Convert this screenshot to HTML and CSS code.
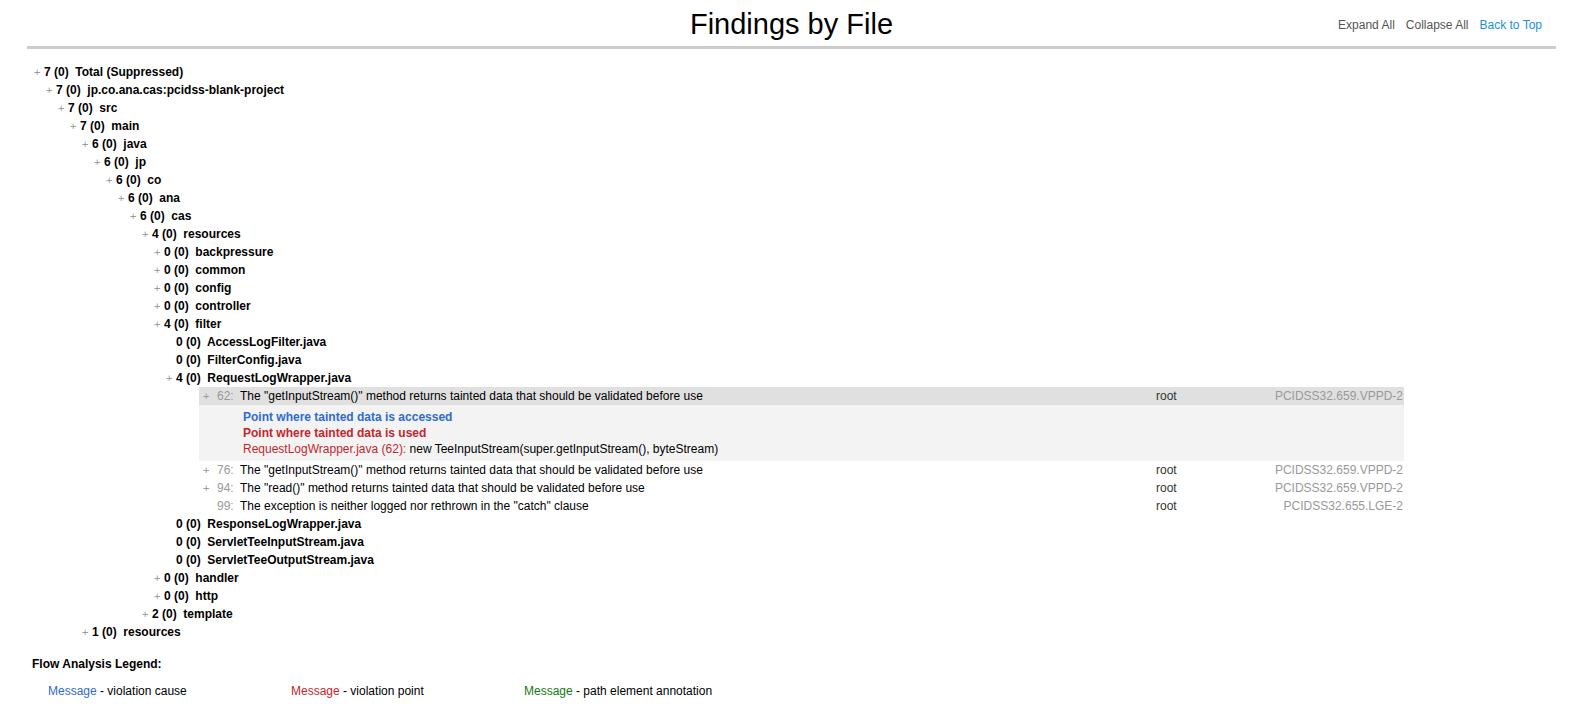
FILE: index.html
```html
<!DOCTYPE html>
<html>
<head>
<meta charset="utf-8">
<title>Findings by File</title>
<link rel="stylesheet" href="styles.css">
</head>
<body>
<header class="hdr">
  <div class="hdr-side"></div>
  <h1 class="title">Findings by File</h1>
  <nav class="hdr-links">
    <a class="lnk">Expand All</a>
    <a class="lnk">Collapse All</a>
    <a class="lnk lnk-top">Back to Top</a>
  </nav>
</header>

<ul class="tree">
  <li><div class="node"><span class="tg">+</span>7 (0)&nbsp; Total (Suppressed)</div>
  <ul class="kids">
    <li><div class="node"><span class="tg">+</span>7 (0)&nbsp; jp.co.ana.cas:pcidss-blank-project</div>
    <ul class="kids">
      <li><div class="node"><span class="tg">+</span>7 (0)&nbsp; src</div>
      <ul class="kids">
        <li><div class="node"><span class="tg">+</span>7 (0)&nbsp; main</div>
        <ul class="kids">
          <li><div class="node"><span class="tg">+</span>6 (0)&nbsp; java</div>
          <ul class="kids">
            <li><div class="node"><span class="tg">+</span>6 (0)&nbsp; jp</div>
            <ul class="kids">
              <li><div class="node"><span class="tg">+</span>6 (0)&nbsp; co</div>
              <ul class="kids">
                <li><div class="node"><span class="tg">+</span>6 (0)&nbsp; ana</div>
                <ul class="kids">
                  <li><div class="node"><span class="tg">+</span>6 (0)&nbsp; cas</div>
                  <ul class="kids">
                    <li><div class="node"><span class="tg">+</span>4 (0)&nbsp; resources</div>
                    <ul class="kids">
                      <li><div class="node"><span class="tg">+</span>0 (0)&nbsp; backpressure</div></li>
                      <li><div class="node"><span class="tg">+</span>0 (0)&nbsp; common</div></li>
                      <li><div class="node"><span class="tg">+</span>0 (0)&nbsp; config</div></li>
                      <li><div class="node"><span class="tg">+</span>0 (0)&nbsp; controller</div></li>
                      <li><div class="node"><span class="tg">+</span>4 (0)&nbsp; filter</div>
                      <ul class="kids">
                        <li><div class="node"><span class="tg"></span>0 (0)&nbsp; AccessLogFilter.java</div></li>
                        <li><div class="node"><span class="tg"></span>0 (0)&nbsp; FilterConfig.java</div></li>
                        <li><div class="node"><span class="tg">+</span>4 (0)&nbsp; RequestLogWrapper.java</div>
                          <div class="findings">
                            <div class="frow frow-open">
                              <span class="ftg">+</span><span class="fnum">62:</span>
                              <span class="fmsg">The "getInputStream()" method returns tainted data that should be validated before use</span>
                              <span class="fuser">root</span><span class="frule">PCIDSS32.659.VPPD-2</span>
                            </div>
                            <div class="fdetail">
                              <div class="fd-cause">Point where tainted data is accessed</div>
                              <div class="fd-point">Point where tainted data is used</div>
                              <div class="fd-line"><span class="fd-loc">RequestLogWrapper.java (62):</span> new TeeInputStream(super.getInputStream(), byteStream)</div>
                            </div>
                            <div class="frow">
                              <span class="ftg">+</span><span class="fnum">76:</span>
                              <span class="fmsg">The "getInputStream()" method returns tainted data that should be validated before use</span>
                              <span class="fuser">root</span><span class="frule">PCIDSS32.659.VPPD-2</span>
                            </div>
                            <div class="frow">
                              <span class="ftg">+</span><span class="fnum">94:</span>
                              <span class="fmsg">The "read()" method returns tainted data that should be validated before use</span>
                              <span class="fuser">root</span><span class="frule">PCIDSS32.659.VPPD-2</span>
                            </div>
                            <div class="frow">
                              <span class="ftg"></span><span class="fnum">99:</span>
                              <span class="fmsg">The exception is neither logged nor rethrown in the "catch" clause</span>
                              <span class="fuser">root</span><span class="frule">PCIDSS32.655.LGE-2</span>
                            </div>
                          </div>
                        </li>
                        <li><div class="node"><span class="tg"></span>0 (0)&nbsp; ResponseLogWrapper.java</div></li>
                        <li><div class="node"><span class="tg"></span>0 (0)&nbsp; ServletTeeInputStream.java</div></li>
                        <li><div class="node"><span class="tg"></span>0 (0)&nbsp; ServletTeeOutputStream.java</div></li>
                      </ul></li>
                      <li><div class="node"><span class="tg">+</span>0 (0)&nbsp; handler</div></li>
                      <li><div class="node"><span class="tg">+</span>0 (0)&nbsp; http</div></li>
                    </ul></li>
                    <li><div class="node"><span class="tg">+</span>2 (0)&nbsp; template</div></li>
                  </ul></li>
                </ul></li>
              </ul></li>
            </ul></li>
          </ul></li>
          <li><div class="node"><span class="tg">+</span>1 (0)&nbsp; resources</div></li>
        </ul></li>
      </ul></li>
    </ul></li>
  </ul></li>
</ul>

<section class="legend">
  <div class="legend-title">Flow Analysis Legend:</div>
  <div class="legend-items">
    <div class="litem litem-1"><span class="c-cause">Message</span> - violation cause</div>
    <div class="litem litem-2"><span class="c-point">Message</span> - violation point</div>
    <div class="litem"><span class="c-annot">Message</span> - path element annotation</div>
  </div>
</section>
</body>
</html>
```

FILE: styles.css
```css
html, body {
  margin: 0;
  padding: 0;
  background: #ffffff;
  font-family: "Liberation Sans", Arial, sans-serif;
  font-size: 12px;
  color: #000;
}

.hdr {
  display: grid;
  grid-template-columns: 1fr auto 1fr;
  margin: 0 27px;
  padding-top: 7px;
  padding-bottom: 5px;
  border-bottom: 3px solid #cccccc;
}

.title {
  margin: 0;
  font-size: 29px;
  font-weight: normal;
  line-height: 34px;
  color: #000;
}

.hdr-links {
  justify-self: end;
  align-self: end;
  display: flex;
  gap: 11px;
  line-height: 14px;
  margin-bottom: 9px;
  padding-right: 14px;
}

.lnk {
  color: #555555;
  cursor: pointer;
}

.lnk-top {
  color: #1a8fd9;
}

.tree, .kids {
  list-style: none;
  margin: 0;
  padding: 0;
}

.tree {
  margin-top: 14px;
  padding-left: 33px;
}

.kids {
  padding-left: 12px;
}

.node {
  font-weight: bold;
  line-height: 18px;
  height: 18px;
  white-space: nowrap;
}

.tg {
  display: inline-block;
  width: 11px;
  padding-left: 1px;
  box-sizing: border-box;
  font-weight: normal;
  font-size: 11px;
  color: #9a9a9a;
}

.findings {
  margin-left: 34px;
  width: 1205px;
}

.frow {
  display: grid;
  grid-template-columns: 18px 18px 921px 99px 1fr;
  line-height: 18px;
  height: 18px;
  white-space: nowrap;
}

.frow-open {
  background: #e0e0e0;
}

.ftg {
  padding-left: 4px;
  font-size: 11px;
  color: #9a9a9a;
}

.fnum {
  text-align: right;
  padding-right: 2px;
  color: #9a9a9a;
}

.fmsg {
  padding-left: 5px;
  color: #000;
}

.fuser {
  color: #333;
}

.frule {
  text-align: right;
  padding-right: 1px;
  color: #999999;
}

.fdetail {
  background: #f3f3f3;
  padding: 4px 0 4px 44px;
  line-height: 16px;
}

.fd-cause {
  color: #2f6bd1;
  font-weight: bold;
}

.fd-point {
  color: #c3262c;
  font-weight: bold;
}

.fd-loc {
  color: #c3262c;
}

.legend {
  margin-top: 14px;
  padding-left: 32px;
}

.legend-title {
  font-weight: bold;
  line-height: 18px;
}

.legend-items {
  display: flex;
  margin-top: 9px;
  padding-left: 16px;
  line-height: 18px;
}

.litem-1 {
  width: 243px;
}

.litem-2 {
  width: 233px;
}

.c-cause { color: #2f6bd1; }
.c-point { color: #c3262c; }
.c-annot { color: #137a13; }
```
